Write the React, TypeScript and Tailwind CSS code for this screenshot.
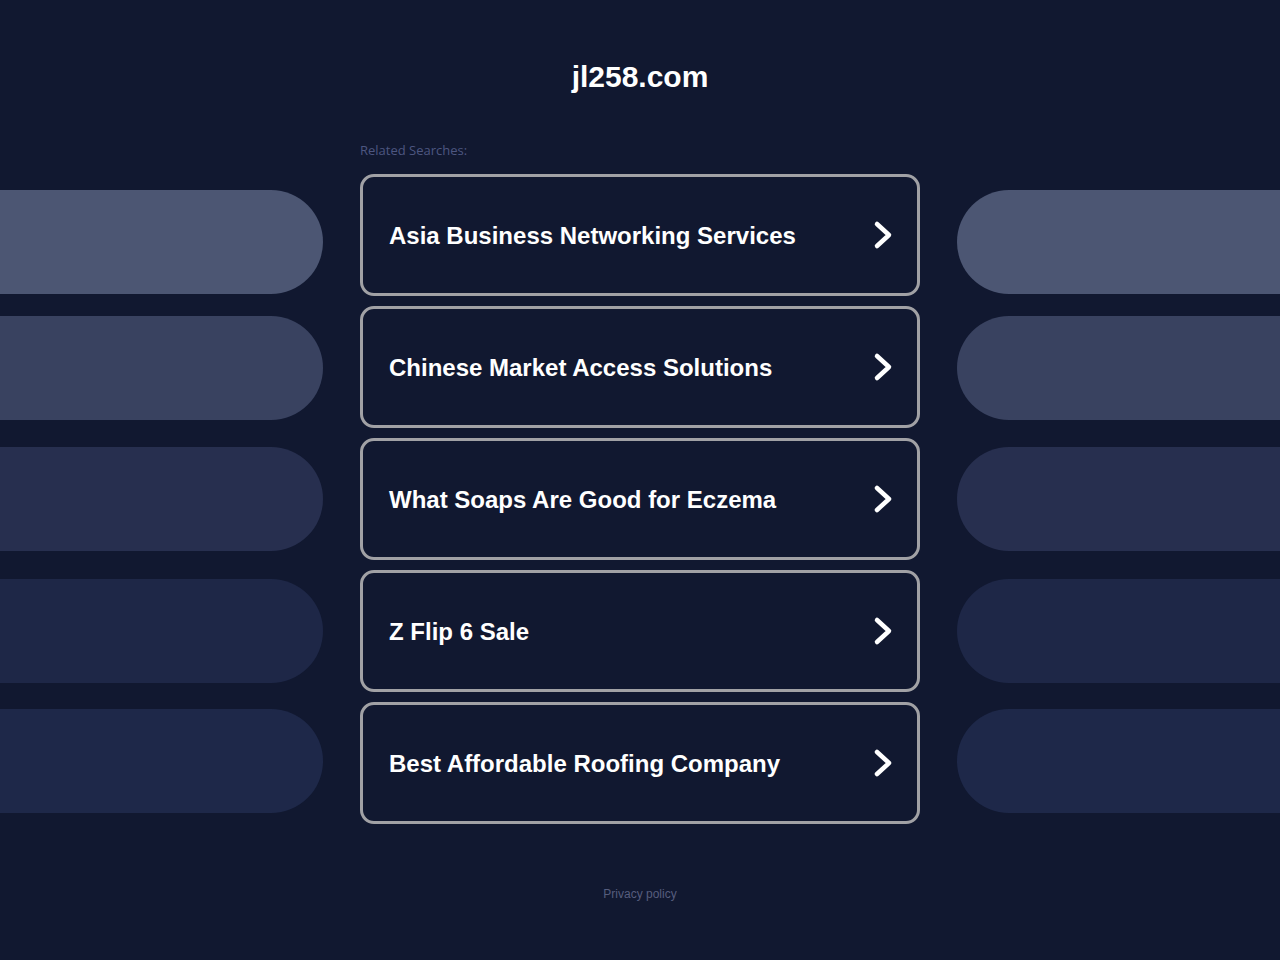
const rows = [
  { label: "Asia Business Networking Services", pill: "bg-[#4c5673]", offset: "mt-[16px]" },
  { label: "Chinese Market Access Solutions", pill: "bg-[#394260]", offset: "mt-[10px]" },
  { label: "What Soaps Are Good for Eczema", pill: "bg-[#272f4f]", offset: "mt-[9px]" },
  { label: "Z Flip 6 Sale", pill: "bg-[#1e2747]", offset: "mt-[9px]" },
  { label: "Best Affordable Roofing Company", pill: "bg-[#1e2849]", offset: "mt-[7px]" },
];

function Chevron() {
  return (
    <svg width="20" height="30" viewBox="0 0 20 30" fill="none">
      <polyline
        points="4,4 16,15 4,26"
        stroke="#ffffff"
        strokeWidth={4.5}
        strokeLinecap="round"
        strokeLinejoin="round"
      />
    </svg>
  );
}

export default function App() {
  return (
    <div className="min-h-screen bg-[#111830] font-['Liberation_Sans',Arial,sans-serif]">
      <h1 className="pt-[59px] text-center text-[30px] leading-[36px] font-bold text-white">
        jl258.com
      </h1>

      <div className="mx-auto mt-[47px] mb-[16px] w-[560px] font-['Open_Sans',sans-serif] text-[13px] leading-4 text-[#4d5680]">
        Related Searches:
      </div>

      <div className="flex flex-col gap-[10px]">
        {rows.map((r) => (
          <div
            key={r.label}
            className="grid grid-cols-[1fr_560px_1fr] gap-x-[37px]"
          >
            <div className={`h-[104px] self-start rounded-r-full ${r.pill} ${r.offset}`} />
            <a
              href="#"
              className="flex h-[122px] items-center justify-between rounded-[14px] border-[3px] border-[#a1a1a5] pl-[26px] pr-[24px]"
            >
              <span className="pt-[2px] text-2xl font-bold text-white">{r.label}</span>
              <Chevron />
            </a>
            <div className={`h-[104px] self-start rounded-l-full ${r.pill} ${r.offset}`} />
          </div>
        ))}
      </div>

      <div className="mt-[62px] pb-[20px] text-center text-xs leading-4 text-[#565d7d]">
        Privacy policy
      </div>
    </div>
  );
}
